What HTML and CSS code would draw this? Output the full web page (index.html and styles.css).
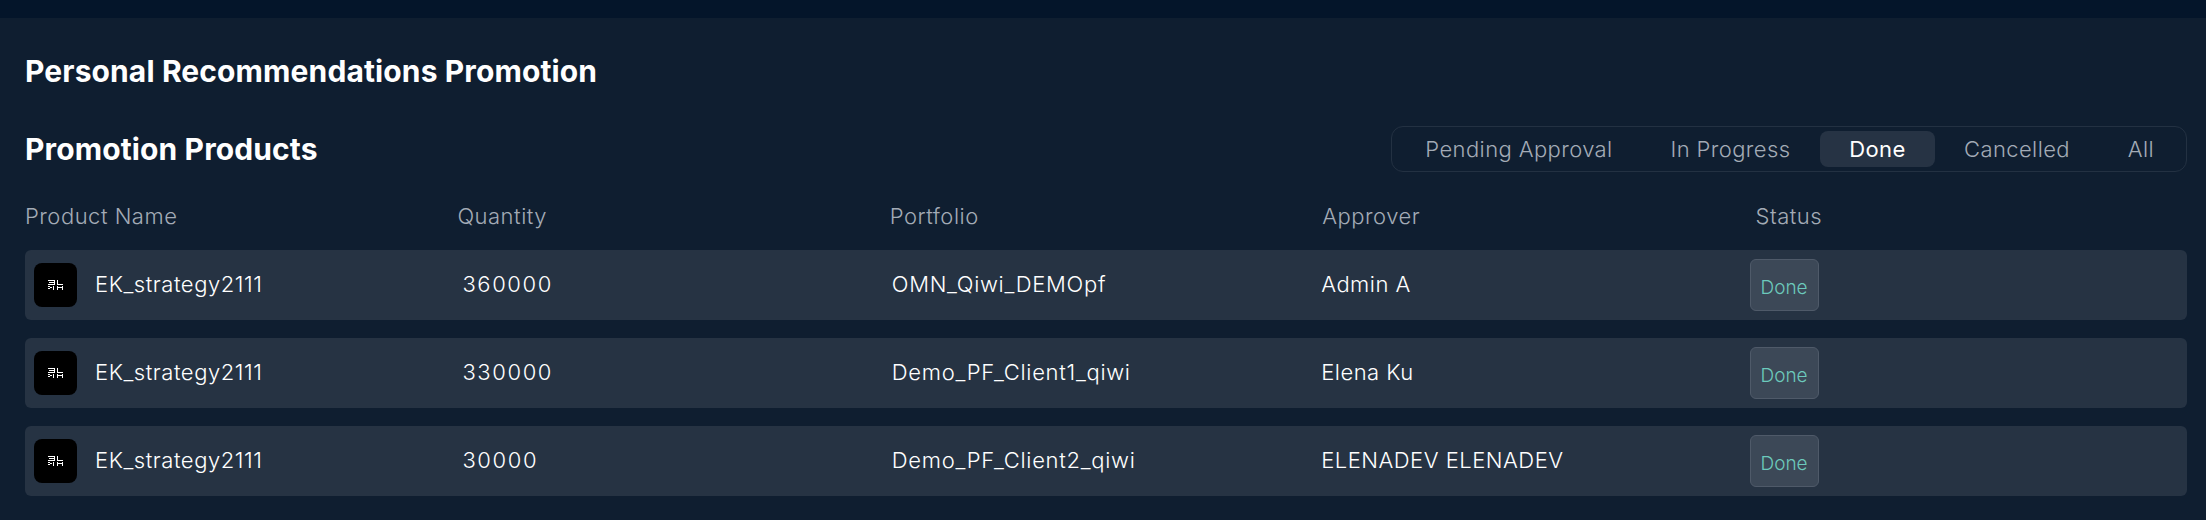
FILE: index.html
```html
<!DOCTYPE html>
<html lang="en">
<head>
<meta charset="utf-8">
<title>Personal Recommendations Promotion</title>
<link rel="stylesheet" href="styles.css">
</head>
<body>
<div class="topbar"></div>
<main class="page">
  <h1 class="title">Personal Recommendations Promotion</h1>
  <div class="section-head">
    <h2 class="title">Promotion Products</h2>
    <nav class="tabs">
      <span class="tab tab-pending">Pending Approval</span>
      <span class="tab tab-progress">In Progress</span>
      <span class="tab tab-done active">Done</span>
      <span class="tab tab-cancelled">Cancelled</span>
      <span class="tab tab-all">All</span>
    </nav>
  </div>
  <div class="cols head">
    <span>Product Name</span><span>Quantity</span><span>Portfolio</span><span>Approver</span><span class="head-status">Status</span>
  </div>
  <div class="cols row">
    <div class="product"><span class="logo"><svg class="mark" width="15" height="10" viewBox="0 0 15 10"><path d="M0 .5h6v4H0M1 2.500h5M9.500 0v4.500H15M0 6l3 1.500L0 9M5.500 6v4M9.500 6v4M9.500 7.500H15M14.500 6v4"/></svg></span><span>EK_strategy2111</span></div>
    <span class="qty">360000</span><span class="pf">OMN_Qiwi_DEMOpf</span><span class="appr">Admin A</span>
    <span class="status"><span class="badge">Done</span></span>
  </div>
  <div class="cols row">
    <div class="product"><span class="logo"><svg class="mark" width="15" height="10" viewBox="0 0 15 10"><path d="M0 .5h6v4H0M1 2.500h5M9.500 0v4.500H15M0 6l3 1.500L0 9M5.500 6v4M9.500 6v4M9.500 7.500H15M14.500 6v4"/></svg></span><span>EK_strategy2111</span></div>
    <span class="qty">330000</span><span class="pf">Demo_PF_Client1_qiwi</span><span class="appr">Elena Ku</span>
    <span class="status"><span class="badge">Done</span></span>
  </div>
  <div class="cols row">
    <div class="product"><span class="logo"><svg class="mark" width="15" height="10" viewBox="0 0 15 10"><path d="M0 .5h6v4H0M1 2.500h5M9.500 0v4.500H15M0 6l3 1.500L0 9M5.500 6v4M9.500 6v4M9.500 7.500H15M14.500 6v4"/></svg></span><span>EK_strategy2111</span></div>
    <span class="qty">30000</span><span class="pf">Demo_PF_Client2_qiwi</span><span class="appr">ELENADEV ELENADEV</span>
    <span class="status"><span class="badge">Done</span></span>
  </div>
</main>
</body>
</html>
```
FILE: styles.css
```css
* { box-sizing: border-box; }
html, body { margin: 0; height: 520px; overflow: hidden; }
body { background: #0f1e30; color: #fff; font-family: Inter, "Noto Sans", sans-serif; }
.topbar { height: 18px; background: #04152a; }
.page { padding: 0 19px 0 25px; }
.title { margin: 0; font-size: 30px; font-weight: 700; line-height: 36px; letter-spacing: .12px; }
h1.title { padding-top: 35px; }
.section-head { display: flex; justify-content: space-between; align-items: center; margin-top: 37px; height: 46px; }
.tabs { display: flex; align-items: center; width: 796px; height: 46px; padding: 4px 5px; border: 1px solid #233142; border-radius: 12px; }
.tab { flex: none; font-size: 22px; font-weight: 300; letter-spacing: .4px; color: #a3abb6; height: 36px; line-height: 36px; text-align: center; border-radius: 8px; }
.tab-pending { width: 244px; }
.tab-progress { width: 179px; }
.tab-done { width: 115px; }
.tab-cancelled { width: 164px; }
.tab-all { width: 84px; }
.tab.active { background: #263344; color: #fff; font-weight: 400; }
.cols { display: grid; grid-template-columns: repeat(5, 432.4px); align-items: center; }
.head { margin-top: 29px; height: 30px; margin-bottom: 19px; font-size: 22px; font-weight: 300; letter-spacing: .5px; color: #a3abb6; }
.head-status { margin-left: 1px; }
.row { height: 70px; padding-bottom: 2px; background: #263343; border-radius: 6px; margin-bottom: 18px; font-size: 22px; font-weight: 350; letter-spacing: .55px; }
.product { display: flex; align-items: center; gap: 18px; padding-left: 9px; }
.logo { width: 43px; height: 44px; margin-top: 2px; border-radius: 8px; background: #000; display: flex; align-items: center; justify-content: center; }
.mark { fill: none; stroke: #fff; stroke-width: 1; shape-rendering: crispEdges; }
.qty { padding-left: 5px; letter-spacing: 1.6px; }
.pf { padding-left: 2px; letter-spacing: .7px; }
.appr { margin-left: -1px; letter-spacing: .5px; }
.status { margin-left: -5px; margin-top: 2px; }
.badge { display: flex; align-items: center; justify-content: center; width: 69px; height: 52px; padding-top: 4px; border: 1px solid #4f5a69; border-radius: 6px; background: #3c4857; color: #6ccabc; font-size: 19px; font-weight: 350; letter-spacing: 0; }
```
